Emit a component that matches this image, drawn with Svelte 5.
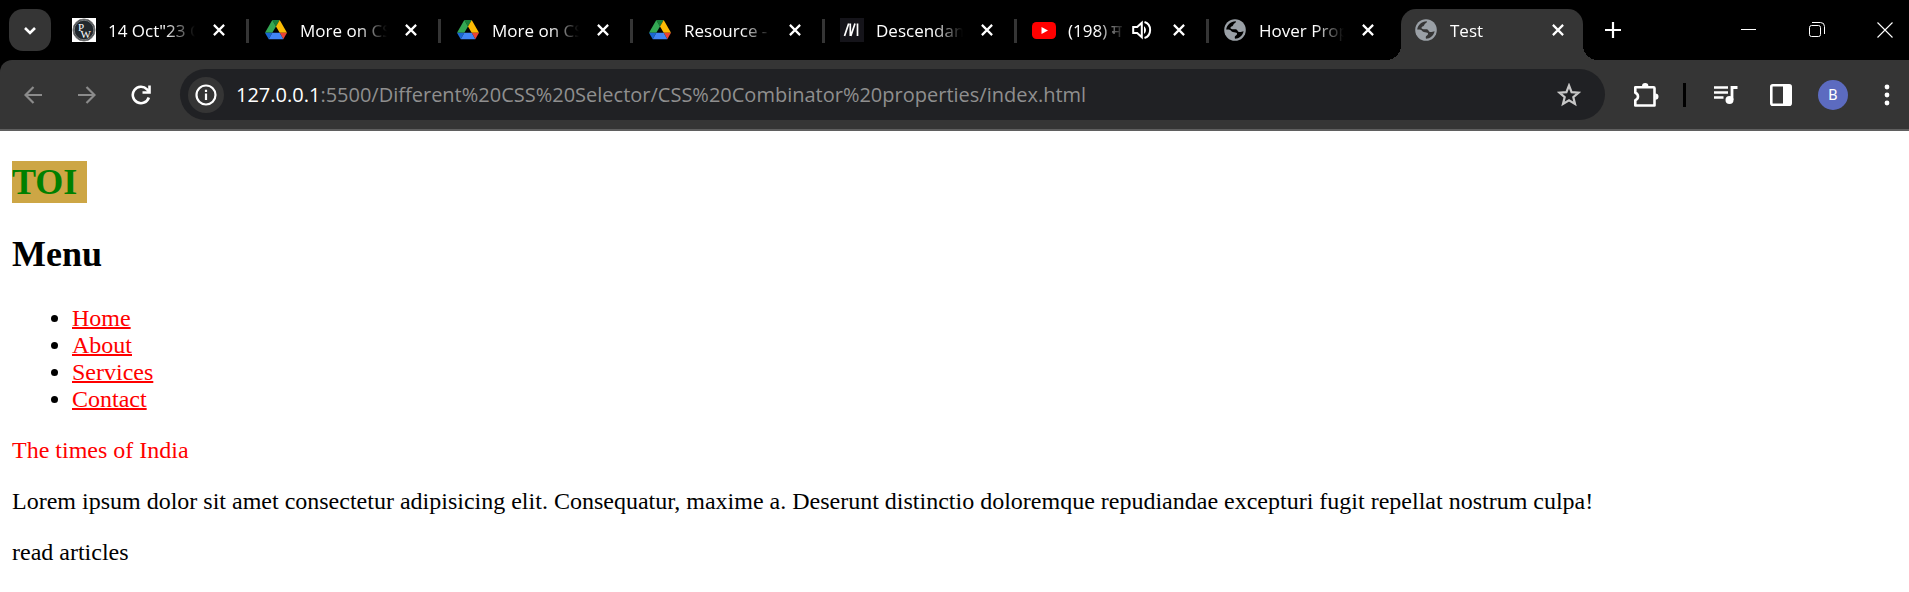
<script>
  const tabs = [
    { icon: 'pw', title: '14 Oct"23 C' },
    { icon: 'drive', title: 'More on CS' },
    { icon: 'drive', title: 'More on CS' },
    { icon: 'drive', title: 'Resource -' },
    { icon: 'mdn', title: 'Descendant' },
    { icon: 'youtube', title: '(198) म', audio: true },
    { icon: 'globe', title: 'Hover Prop' },
    { icon: 'globe', title: 'Test', active: true }
  ];
  const links = ['Home', 'About', 'Services', 'Contact'];
</script>

<div class="browser">
  <header class="strip">
    <button class="search" aria-label="Search tabs">
      <svg width="14" height="9" viewBox="0 0 14 9"><path d="M2 2l5 5 5-5" fill="none" stroke="#fff" stroke-width="2.6" /></svg>
    </button>
    <nav class="tabs" aria-label="Tabs">
      {#each tabs as tab}
        <div class="tab" class:active={tab.active}>
          <svg class="favicon" viewBox="0 0 24 24" aria-hidden="true">
            {#if tab.icon === 'pw'}
              <rect width="24" height="24" fill="#fff" />
              <circle cx="12" cy="12" r="11" fill="#22282d" stroke="#777" />
              <circle cx="12" cy="12" r="9.8" fill="none" stroke="#cfcfcf" stroke-width=".5" />
              <text x="6" y="12.5" class="mono">P</text>
              <text x="8.5" y="19.5" class="mono">W</text>
            {:else if tab.icon === 'drive'}
              <path d="M8.3 2h7.4L12 8.400z" fill="#188038" />
              <path d="M8.300 2L1 14.800h7.300L12 8.400z" fill="#34a853" />
              <path d="M15.700 2L12 8.400l3.700 6.400H23z" fill="#fbbc04" />
              <path d="M1 14.800h7.300L4.700 21.200z" fill="#1967d2" />
              <path d="M15.700 14.800H23l-3.700 6.400z" fill="#ea4335" />
              <path d="M8.300 14.800h7.400l3.600 6.400H4.700z" fill="#4285f4" />
            {:else if tab.icon === 'mdn'}
              <rect width="24" height="24" fill="#15141a" />
              <path d="M4.500 18L8.700 5.500M10.300 18V5.500M10.800 18L15 5.500M17.500 5.500V18" fill="none" stroke="#fff" stroke-width="1.700" />
            {:else if tab.icon === 'youtube'}
              <rect y="4" width="24" height="17" rx="4.500" fill="#f00" />
              <path d="M9.500 9l6.500 3.500-6.500 3.500z" fill="#fff" />
            {:else}
              <circle cx="12" cy="12" r="10.800" fill="#9aa0a6" />
              <path class="sea" d="M3.200 11.500C4 7 7.500 3.200 13 3.300c-.2 1.500-1 1.800-1.800 2.300-1.200.8-.5 2-1.900 2.600-1 .4-1.800.5-1.800 1.700 0 1.600 3.200 1.100 5.400 1.400 1.700.300 1.500 2.300 3 2.700 1.700.4 3-.5 4.700-.8-.8 4.300-4.500 7.500-8.600 7.500-.5-1.900-.3-2.300 1-3.200 1.200-.9 1.500-2 .4-2.700-1.300-.8-3.400-.2-4.700-1.400-1.100-1.100-1.300-1.900-5.500-1.900z" />
            {/if}
          </svg>
          <span class="title">{tab.title}</span>
          {#if tab.audio}
            <svg class="audio" width="20" height="20" viewBox="0 0 20 20" aria-label="Playing audio">
              <path d="M1.200 7v6h4l4.600 4.300V2.700L5.200 7z" fill="none" stroke="#fff" stroke-width="2" />
              <path d="M12 6.200c2.600 1.600 2.600 6 0 7.600z" fill="#fff" />
              <path d="M12.500 2c7.500 2.400 7.500 13.600 0 16" fill="none" stroke="#fff" stroke-width="2" />
            </svg>
          {/if}
          <button class="close" aria-label="Close tab">
            <svg width="12" height="12" viewBox="0 0 12 12"><path d="M.9.9l10.200 10.200M11.100.9L.9 11.100" stroke="#fff" stroke-width="2.200" /></svg>
          </button>
        </div>
      {/each}
    </nav>
    <button class="new" aria-label="New tab">
      <svg width="16" height="16" viewBox="0 0 16 16"><path d="M8 0v16M0 8h16" stroke="#fff" stroke-width="2.200" /></svg>
    </button>
    <div class="window">
      <button aria-label="Minimize"><svg width="16" height="16" viewBox="0 0 16 16"><path d="M0 7.500h15" stroke="#fff" /></svg></button>
      <button aria-label="Restore">
        <svg width="16" height="16" viewBox="0 0 16 16" fill="none" stroke="#fff"><rect x=".5" y="3.500" width="11" height="11" rx="2" /><path d="M3 .5h8.500a4 4 0 0 1 4 4V12" /></svg>
      </button>
      <button aria-label="Close"><svg width="16" height="16" viewBox="0 0 16 16"><path d="M.5.5l15 15M15.500.5l-15 15" stroke="#fff" stroke-width="1.100" /></svg></button>
    </div>
  </header>

  <div class="toolbar">
    <button class="nav" aria-label="Back">
      <svg width="18" height="18" viewBox="0 0 18 18" fill="none" stroke="#8b8b8b" stroke-width="2.200"><path d="M18 9H2M9.500 1L1.500 9l8 8" /></svg>
    </button>
    <button class="nav" aria-label="Forward">
      <svg width="18" height="18" viewBox="0 0 18 18" fill="none" stroke="#8b8b8b" stroke-width="2.200"><path d="M0 9h16M8.500 1l8 8-8 8" /></svg>
    </button>
    <button class="nav" aria-label="Reload">
      <svg width="20" height="20" viewBox="0 0 20 20" fill="none" stroke="#fff" stroke-width="2.600"><path d="M17.800 12.500A8.200 8.200 0 1 1 16 4.400l2 2.200" /><path d="M18.500.5v7h-7" /></svg>
    </button>
    <div class="omnibox">
      <button class="info" aria-label="View site information">
        <svg width="22" height="22" viewBox="0 0 22 22"><circle cx="11" cy="11" r="9.500" fill="none" stroke="#fff" stroke-width="2.200" /><path d="M11 9.500v6.500M11 5.800v2.200" stroke="#fff" stroke-width="2.200" /></svg>
      </button>
      <span class="url"><b>127.0.0.1</b>:5500/Different%20CSS%20Selector/CSS%20Combinator%20properties/index.html</span>
      <button class="star" aria-label="Bookmark this tab">
        <svg width="24" height="24" viewBox="0 0 24 24"><path d="M12 2.500l2.600 6.600 7 .500-5.300 4.500 1.700 6.900L12 17.300 6 21l1.700-6.900-5.300-4.500 7-.500z" fill="none" stroke="#c7c7c7" stroke-width="2.200" /></svg>
      </button>
    </div>
    <div class="actions">
      <button aria-label="Extensions">
        <svg width="26" height="26" viewBox="0 0 26 26"><path d="M2.300 5.300h18.200a1 1 0 0 1 1 1v17.200H2.300v-5.300c3.600-1.400 3.600-6 0-7.400z" fill="none" stroke="#fff" stroke-width="2.600" stroke-linejoin="round" /><path d="M9 4.300a3.200 3.200 0 0 1 6.400 0zM22.300 11.400a3.200 3.200 0 0 1 0 6.400z" fill="#fff" /></svg>
      </button>
      <span class="divider"></span>
      <button aria-label="Media controls">
        <svg width="24" height="24" viewBox="0 0 24 24"><path d="M0 4.500h14M0 9.500h14M0 14.500h9.500" stroke="#fff" stroke-width="2.400" /><path d="M18 17V4.500h5.500" fill="none" stroke="#fff" stroke-width="2.800" /><circle cx="15.500" cy="17" r="4" fill="#fff" /></svg>
      </button>
      <button aria-label="Side panel">
        <svg width="22" height="22" viewBox="0 0 22 22"><rect x="1.300" y="1.300" width="19.400" height="19.400" rx="1.500" fill="none" stroke="#fff" stroke-width="2.600" /><path d="M13 1h8v20h-8z" fill="#fff" /></svg>
      </button>
      <button class="avatar" aria-label="Profile">B</button>
      <button class="more" aria-label="Menu">
        <svg width="6" height="22" viewBox="0 0 6 22" fill="#fff"><circle cx="3" cy="3" r="2.400" /><circle cx="3" cy="11" r="2.400" /><circle cx="3" cy="19" r="2.400" /></svg>
      </button>
    </div>
  </div>
</div>

<main>
  <h1><span>TOI&nbsp;</span></h1>
  <h2>Menu</h2>
  <ul>
    {#each links as link}
      <li><a href="#{link}">{link}</a></li>
    {/each}
  </ul>
  <p class="red">The times of India</p>
  <p>Lorem ipsum dolor sit amet consectetur adipisicing elit. Consequatur, maxime a. Deserunt distinctio doloremque repudiandae excepturi fugit repellat nostrum culpa!</p>
  <p>read articles</p>
</main>

<style>
  :global(body) { margin: 0; background: #fff; }
  .browser { background: #000; font-family: "Open Sans", "Noto Sans", sans-serif; color: #fff; }
  button { display: flex; align-items: center; justify-content: center; flex: none; padding: 0; border: 0; background: none; color: inherit; font: inherit; }
  svg { display: block; flex: none; }

  .strip { display: flex; align-items: center; height: 60px; padding: 0 12px 0 9px; box-sizing: border-box; }
  .search { width: 42px; height: 42px; margin-right: 6px; border-radius: 14px; background: #353535; }
  .tabs { display: flex; align-self: stretch; min-width: 0; }
  .tab { display: flex; align-items: center; position: relative; width: 192px; padding: 0 12px 0 15px; box-sizing: border-box; }
  .tab::after { content: ""; position: absolute; right: 0; top: 19px; width: 3px; height: 24px; background: #353535; }
  .tab:nth-last-child(2) { padding: 0 15px 0 14px; }
  .tab:nth-last-child(2)::after { display: none; }
  .favicon { width: 24px; height: 24px; margin-right: 12px; }
  .sea { fill: #000; }
  .mono { font: 11px "Liberation Serif", serif; fill: #fff; }
  .title { flex: 1; min-width: 0; margin-right: 6px; padding-top: 2px; overflow: hidden; white-space: nowrap; font-size: 17px; line-height: 24px; mask-image: linear-gradient(to right, #000 calc(100% - 30px), transparent); }
  .audio { margin-right: 9px; }
  .close { width: 36px; height: 36px; }
  .tab.active { width: 182px; margin-top: 9px; padding: 0 7px 9px 13px; border-radius: 15px 15px 0 0; background: #353535; }
  .active::before, .active::after { content: ""; position: absolute; top: auto; bottom: 0; width: 15px; height: 15px; background: radial-gradient(circle at 0 0, transparent 15px, #353535 15px); }
  .active::before { left: -15px; }
  .active::after { right: -15px; background: radial-gradient(circle at 100% 0, transparent 15px, #353535 15px); }
  .active .sea { fill: #353535; }
  .new { width: 36px; height: 36px; margin-left: 12px; }
  .window { display: flex; gap: 44px; margin-left: auto; }
  .window button { width: 24px; height: 36px; }

  .toolbar { display: flex; align-items: center; padding: 9px 4px 9px 6px; border-bottom: 2px solid #5f5f5f; border-radius: 12px 0 0 0; background: #353535; }
  .nav { width: 54px; height: 36px; }
  .omnibox { display: flex; align-items: center; flex: 1; min-width: 0; height: 51px; margin: 0 23px 0 12px; padding: 0 18px 0 8px; box-sizing: border-box; border-radius: 26px; background: #202124; }
  .info { width: 36px; height: 36px; margin-right: 12px; border-radius: 50%; background: #353535; }
  .url { flex: 1; min-width: 0; overflow: hidden; white-space: nowrap; font-size: 20px; line-height: 28px; color: #8f8f8f; }
  .url b { font-weight: 400; color: #fff; }
  .star { width: 36px; height: 36px; }
  .actions { display: flex; align-items: center; gap: 19px; }
  .actions button { width: 36px; height: 36px; }
  .divider { width: 3px; height: 24px; margin-right: 3px; background: #000; }
  .actions .avatar { width: 30px; height: 30px; border-radius: 50%; background: #5c6bc0; font-family: Roboto, sans-serif; font-size: 15px; }
  .more { margin-left: 2px; }

  main { padding: 0 12px; overflow: auto; font-family: "Liberation Serif", serif; font-size: 24px; line-height: 27px; color: #000; }
  h1, h2 { margin: 30px 0; font-size: 36px; line-height: 42px; }
  h1 span { display: inline-block; vertical-align: top; padding-right: 1px; background: #cda645; color: #008000; }
  ul { margin: 0; padding-left: 60px; }
  a, .red { color: #f00; }
  a { text-decoration-thickness: 2px; }
  p { margin: 24px 0; }
</style>
